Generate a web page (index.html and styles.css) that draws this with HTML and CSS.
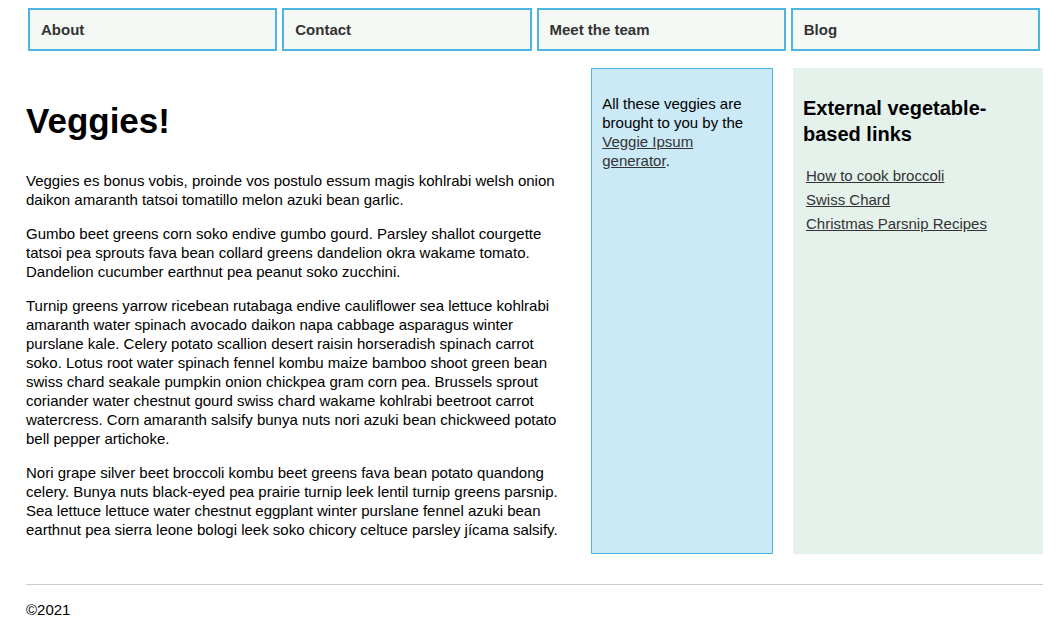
FILE: index.html
```html
<!DOCTYPE html>
<html lang="en">
<head>
<meta charset="utf-8">
<title>Veggies!</title>
<link rel="stylesheet" href="styles.css">
</head>
<body>
<nav class="nav">
  <ul class="nav-list">
    <li class="nav-item"><a class="nav-link" href="#">About</a></li>
    <li class="nav-item"><a class="nav-link" href="#">Contact</a></li>
    <li class="nav-item"><a class="nav-link" href="#">Meet the team</a></li>
    <li class="nav-item"><a class="nav-link" href="#">Blog</a></li>
  </ul>
</nav>
<div class="layout">
  <main class="content">
    <h1 class="title">Veggies!</h1>
    <p class="para">Veggies es bonus vobis, proinde vos postulo essum magis kohlrabi welsh onion daikon amaranth tatsoi tomatillo melon azuki bean garlic.</p>
    <p class="para">Gumbo beet greens corn soko endive gumbo gourd. Parsley shallot courgette tatsoi pea sprouts fava bean collard greens dandelion okra wakame tomato. Dandelion cucumber earthnut pea peanut soko zucchini.</p>
    <p class="para">Turnip greens yarrow ricebean rutabaga endive cauliflower sea lettuce kohlrabi amaranth water spinach avocado daikon napa cabbage asparagus winter purslane kale. Celery potato scallion desert raisin horseradish spinach carrot soko. Lotus root water spinach fennel kombu maize bamboo shoot green bean swiss chard seakale pumpkin onion chickpea gram corn pea. Brussels sprout coriander water chestnut gourd swiss chard wakame kohlrabi beetroot carrot watercress. Corn amaranth salsify bunya nuts nori azuki bean chickweed potato bell pepper artichoke.</p>
    <p class="para">Nori grape silver beet broccoli kombu beet greens fava bean potato quandong celery. Bunya nuts black-eyed pea prairie turnip leek lentil turnip greens parsnip. Sea lettuce lettuce water chestnut eggplant winter purslane fennel azuki bean earthnut pea sierra leone bologi leek soko chicory celtuce parsley jícama salsify.</p>
  </main>
  <aside class="note">
    <p class="para">All these veggies are brought to you by the <a class="link" href="#">Veggie Ipsum generator</a>.</p>
  </aside>
  <section class="sidebar">
    <h2 class="side-title">External vegetable-based links</h2>
    <ul class="links">
      <li class="links-item"><a class="link" href="#">How to cook broccoli</a></li>
      <li class="links-item"><a class="link" href="#">Swiss Chard</a></li>
      <li class="links-item"><a class="link" href="#">Christmas Parsnip Recipes</a></li>
    </ul>
  </section>
</div>
<footer class="footer">
  <p class="copy">©2021</p>
</footer>
</body>
</html>
```
FILE: styles.css
```css
html {
  background: #fff;
}
body {
  margin: 0;
  padding: 8px 14px 0 26px;
  font-family: "Liberation Sans", Arial, sans-serif;
  font-size: 15px;
  line-height: 19px;
  color: #000;
}
.nav {
  margin: 0 3px 0 2px;
}
.nav-list {
  list-style: none;
  margin: 0;
  padding: 0;
  display: grid;
  grid-template-columns: repeat(4, 1fr);
  gap: 5px;
}
.nav-item {
  border: 2px solid #4db6e0;
  background: #f5f9f6;
}
.nav-link {
  display: block;
  padding: 10px 11px;
  font-weight: bold;
  color: #333;
  text-decoration: none;
}
.layout {
  margin-top: 17px;
  display: grid;
  grid-template-columns: 3fr 1fr 250px;
  gap: 20px;
  align-items: stretch;
}
.content {
  padding: 10px 0 15px;
}
.title {
  font-size: 35px;
  line-height: 40px;
  margin: 23px 0 30px;
}
.para {
  margin: 15px 0;
}
.content .para:last-child {
  margin-bottom: 0;
}
.note {
  border: 1px solid #4db6e0;
  background: #cbe9f6;
  padding: 10px;
}
.sidebar {
  background: #e5f2ec;
  padding: 10px;
}
.side-title {
  font-size: 20px;
  line-height: 26px;
  margin: 17px 0 17px;
}
.links {
  list-style: none;
  margin: 0;
  padding: 0 0 0 3px;
}
.links-item {
  line-height: 24px;
}
.link {
  color: #333;
}
.footer {
  margin-top: 30px;
  border-top: 1px solid #ccc;
}
.copy {
  margin: 15px 0;
}
```
